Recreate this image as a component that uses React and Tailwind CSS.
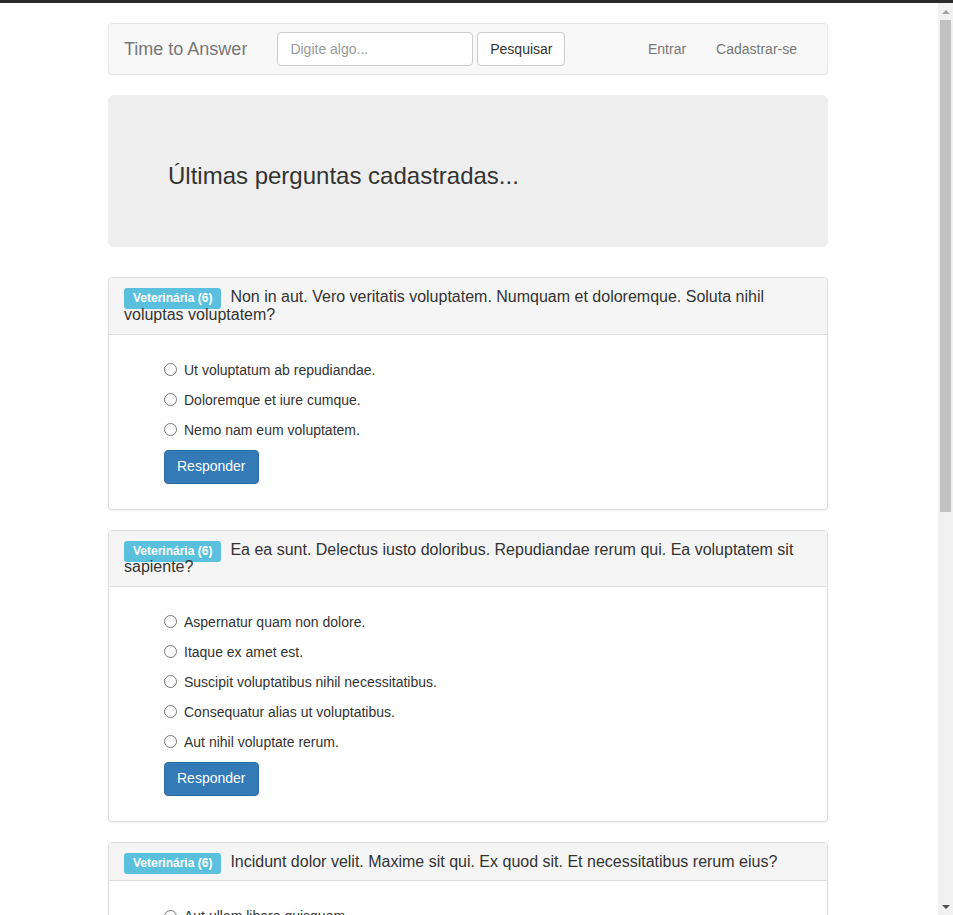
import React from "react";

const questions = [
  {
    title:
      "Non in aut. Vero veritatis voluptatem. Numquam et doloremque. Soluta nihil voluptas voluptatem?",
    options: [
      "Ut voluptatum ab repudiandae.",
      "Doloremque et iure cumque.",
      "Nemo nam eum voluptatem.",
    ],
  },
  {
    title:
      "Ea ea sunt. Delectus iusto doloribus. Repudiandae rerum qui. Ea voluptatem sit sapiente?",
    options: [
      "Aspernatur quam non dolore.",
      "Itaque ex amet est.",
      "Suscipit voluptatibus nihil necessitatibus.",
      "Consequatur alias ut voluptatibus.",
      "Aut nihil voluptate rerum.",
    ],
  },
  {
    title:
      "Incidunt dolor velit. Maxime sit qui. Ex quod sit. Et necessitatibus rerum eius?",
    options: [
      "Aut ullam libero quisquam.",
      "Voluptas non omnis dolor.",
      "Quia et sint voluptatem.",
      "Ratione est ut rerum.",
    ],
  },
];

const QuestionPanel = ({ question, index }) => {
  return (
    <div className="mb-5 rounded border border-[#ddd] bg-white shadow-[0_1px_1px_rgba(0,0,0,0.05)]">
      <div className="rounded-t border-b border-[#ddd] bg-[#f5f5f5] px-[15px] py-[10px]">
        <h3 className="text-[16px] leading-[1.1] text-[#333]">
          <span className="mr-[9px] rounded-[3px] bg-[#5bc0de] px-[9px] pb-[4px] pt-[3px] text-[12px] font-bold leading-none text-white">
            Veterinária (6)
          </span>
          {question.title}
        </h3>
      </div>

      <div className="p-[15px]">
        <form className="pb-[10px] pl-10 pt-[10px]">
          <div className="flex flex-col gap-[10px]">
            {question.options.map((option, idx) => (
              <label
                key={idx}
                className="flex h-5 items-center text-[14px] leading-5 text-[#333]"
              >
                <input
                  type="radio"
                  name={`q${index}`}
                  className="m-0 mr-[7px] h-[13px] w-[13px]"
                />
                {option}
              </label>
            ))}
          </div>
          <button
            type="button"
            className="mt-[10px] h-[34px] rounded border border-[#2e6da4] bg-[#337ab7] px-3 text-[14px] text-white"
          >
            Responder
          </button>
        </form>
      </div>
    </div>
  );
};

// browser scrollbar as it shows in the screenshot
const Scrollbar = () => (
  <div className="flex w-[15px] shrink-0 flex-col items-center bg-[#f1f1f1]">
    <div className="flex h-[17px] w-full items-center justify-center">
      <div className="h-0 w-0 border-x-[4px] border-b-[4px] border-x-transparent border-b-[#a3a3a3]" />
    </div>
    <div className="h-[492px] w-[11px] bg-[#c1c1c1]" />
    <div className="flex-1" />
    <div className="flex h-[17px] w-full items-center justify-center">
      <div className="h-0 w-0 border-x-[4px] border-t-[4px] border-x-transparent border-t-[#505050]" />
    </div>
  </div>
);

export default function App() {
  return (
    <div
      className="flex h-screen flex-col bg-white"
      style={{ fontFamily: '"Liberation Sans", Arial, sans-serif' }}
    >
      <div className="h-[3px] shrink-0 bg-[#2a2a2a]" />
      <div className="flex min-h-0 flex-1">
        <div className="min-w-0 flex-1 overflow-hidden pr-[2px]">
          <div className="mx-auto w-[720px] pt-5">
            {/* Navbar */}
            <nav className="mb-5 flex h-[52px] items-center rounded border border-[#e7e7e7] bg-[#f8f8f8]">
              <span className="px-[15px] text-[18px] leading-5 text-[#777]">
                Time to Answer
              </span>
              <div className="flex items-center gap-1 px-[15px]">
                <input
                  type="text"
                  placeholder="Digite algo..."
                  className="h-[34px] w-[196px] rounded border border-[#ccc] bg-white px-3 text-[14px] text-[#555] placeholder:text-[#999]"
                />
                <button
                  type="button"
                  className="h-[34px] w-[88px] rounded border border-[#ccc] bg-white text-[14px] text-[#333]"
                >
                  Pesquisar
                </button>
              </div>
              <div className="ml-auto mr-[15px] flex text-[14px] text-[#777]">
                <a className="px-[15px] leading-5">Entrar</a>
                <a className="px-[15px] leading-5">Cadastrar-se</a>
              </div>
            </nav>

            {/* Jumbotron */}
            <div className="mb-[30px] rounded-md bg-[#eee] px-[60px] py-12">
              <h3 className="mb-[10px] mt-5 text-[24px] leading-[1.1] text-[#333]">
                Últimas perguntas cadastradas...
              </h3>
            </div>

            {questions.map((question, index) => (
              <QuestionPanel key={index} question={question} index={index} />
            ))}
          </div>
        </div>
        <Scrollbar />
      </div>
    </div>
  );
}
